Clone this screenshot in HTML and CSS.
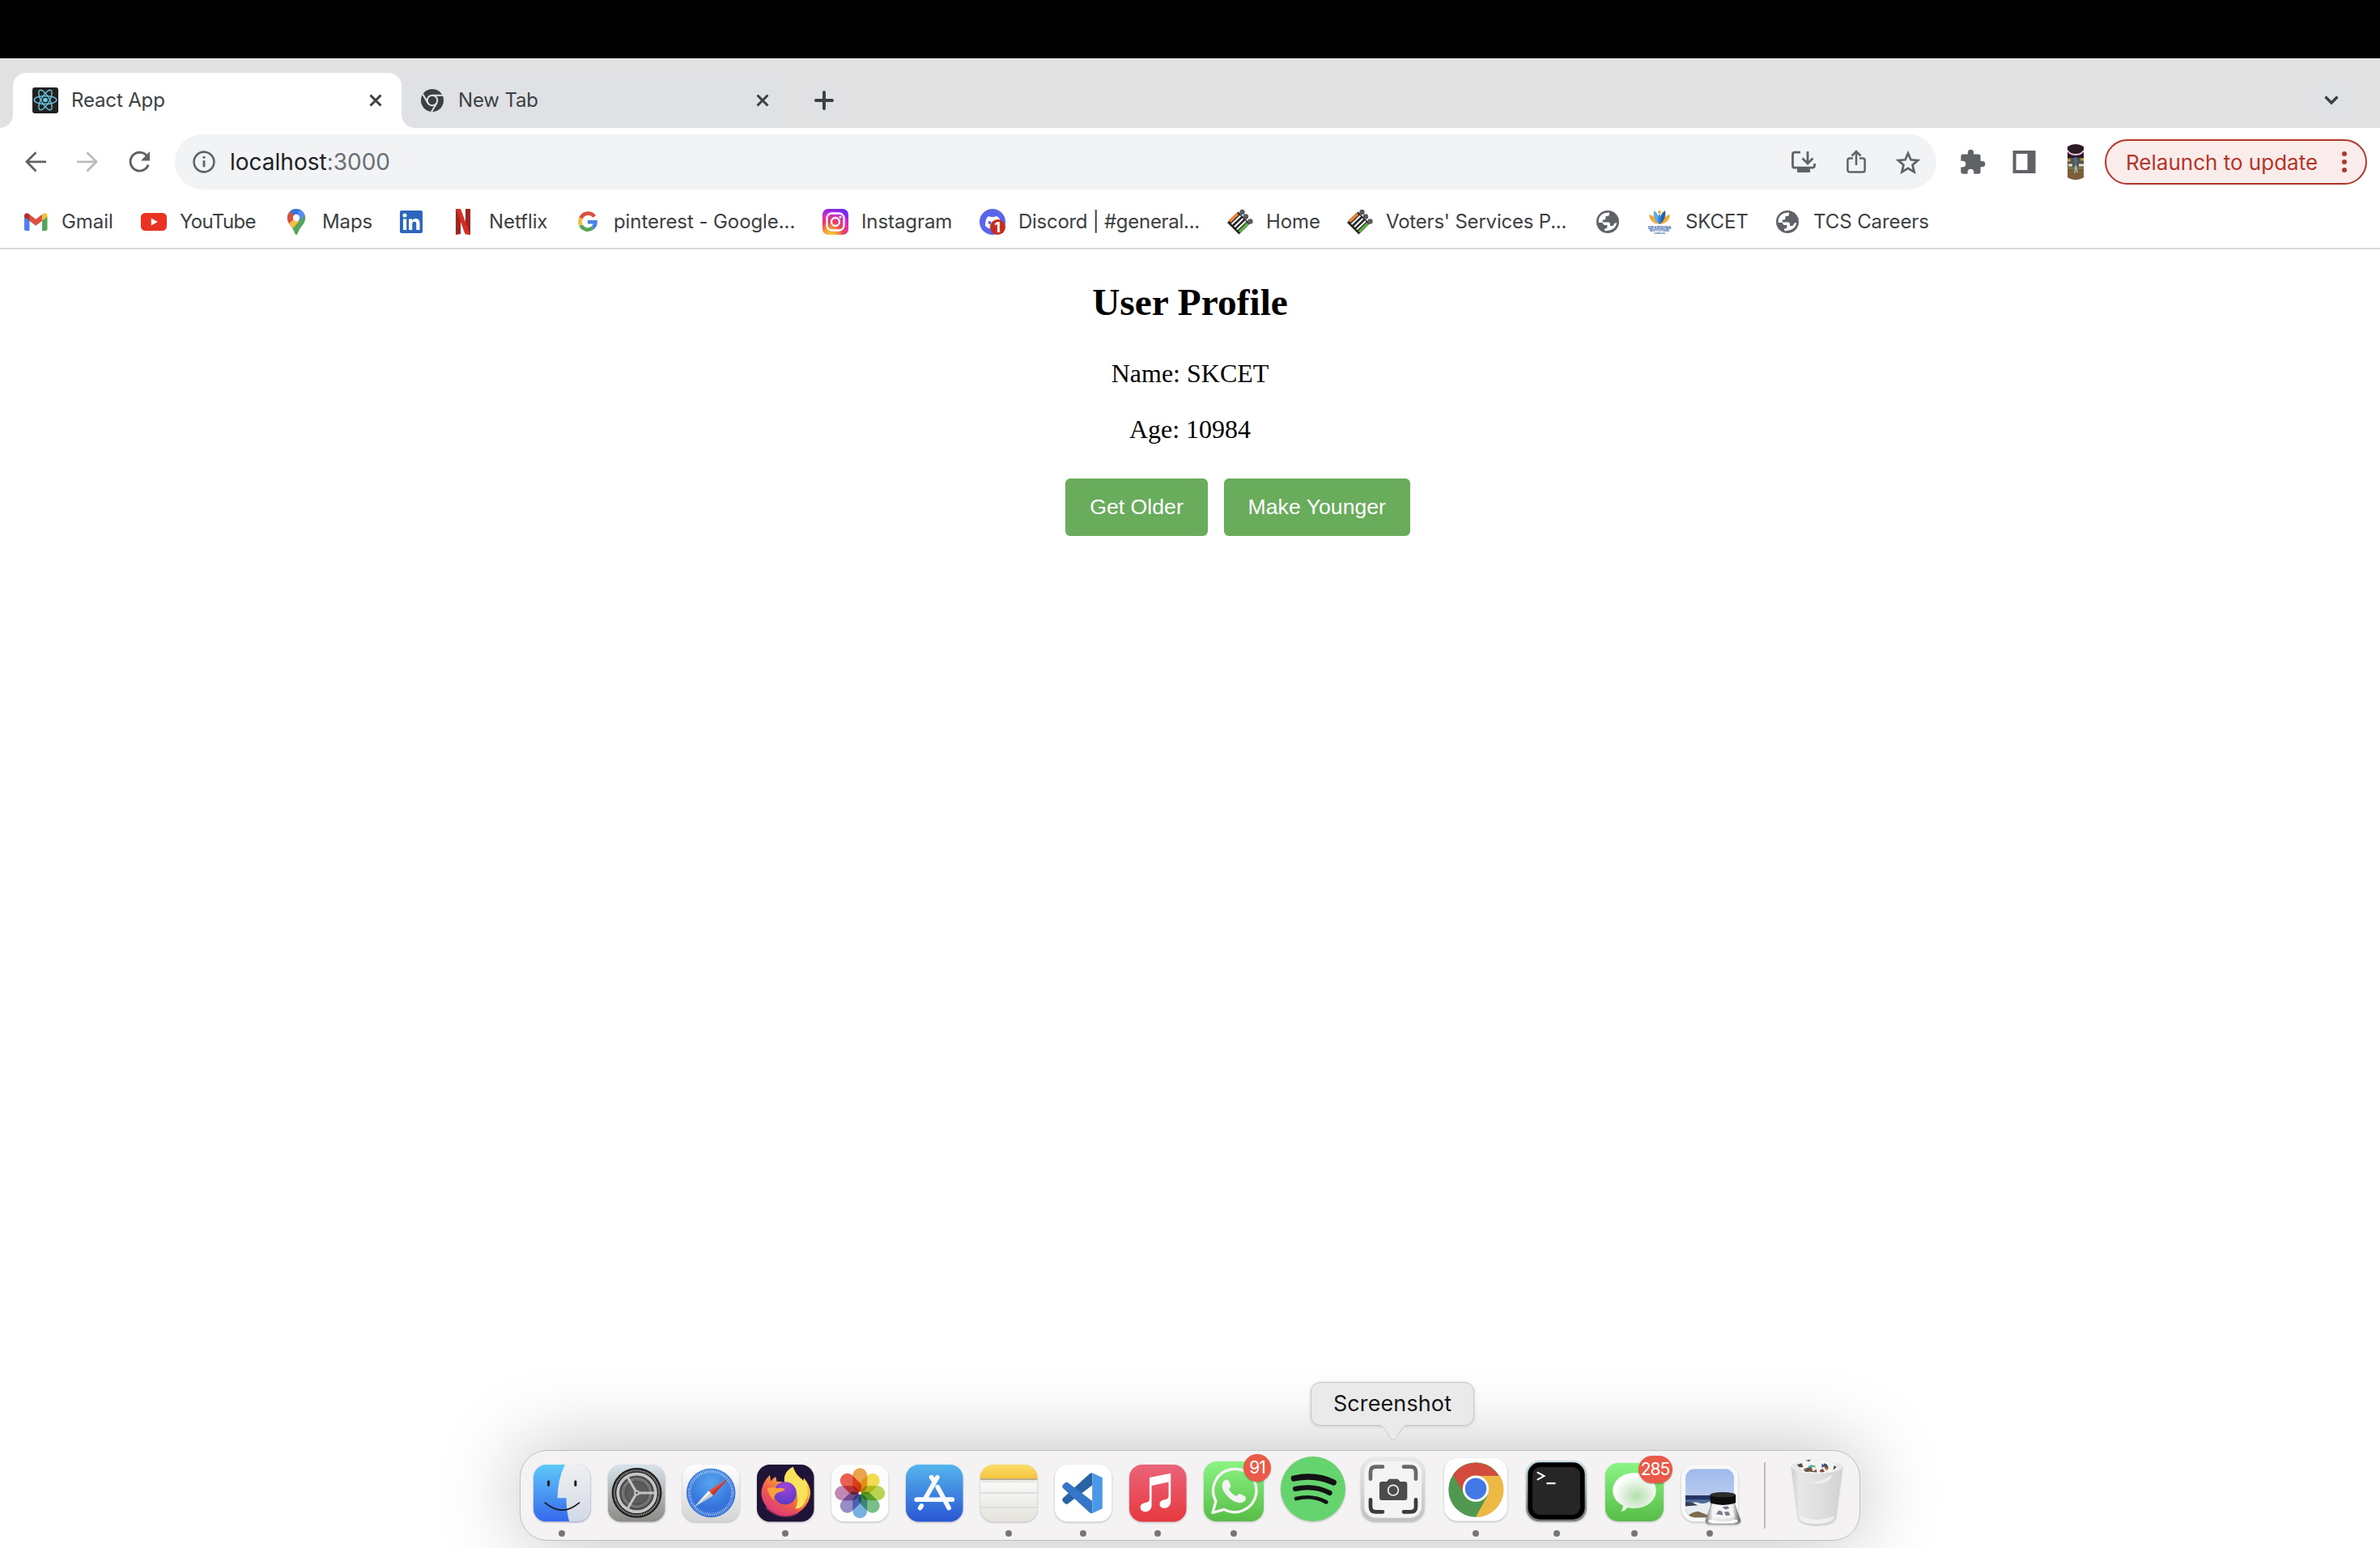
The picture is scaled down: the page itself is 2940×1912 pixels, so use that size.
FILE: index.html
```html
<!DOCTYPE html>
<html lang="en">
<head>
<meta charset="utf-8">
<title>React App</title>
<link rel="stylesheet" href="styles.css">
</head>
<body>
<div class="notch"></div>
<header class="tabs">
  <div class="tab active">
    <svg class="fav32" viewBox="0 0 32 32"><rect width="32" height="32" rx="3" fill="#212121"/><g fill="none" stroke="#6dc8e6" stroke-width="1.4"><ellipse cx="16" cy="15.500" rx="13.800" ry="5"/><ellipse cx="16" cy="15.500" rx="13.800" ry="5" transform="rotate(60 16 15.5)"/><ellipse cx="16" cy="15.500" rx="13.800" ry="5" transform="rotate(120 16 15.5)"/></g><circle cx="16" cy="15.500" r="2.800" fill="#6dc8e6"/></svg>
    <span class="tab-title">React App</span>
    <svg class="close" viewBox="0 0 16 16"><path d="M1.500 1.500l13 13M14.500 1.500l-13 13" stroke="#3c4043" stroke-width="3"/></svg>
  </div>
  <div class="tab idle">
    <svg class="fav28" viewBox="0 0 28 28"><circle cx="14" cy="14" r="14" fill="#3c4043"/><g fill="none" stroke="#dfe1e5" stroke-width="2"><circle cx="14" cy="14" r="6.300"/><path d="M14 7.700H27M8.500 17.200L2 6M19.500 17.200L13 28"/></g></svg>
    <span class="tab-title">New Tab</span>
    <svg class="close" viewBox="0 0 16 16"><path d="M1.500 1.500l13 13M14.500 1.500l-13 13" stroke="#3c4043" stroke-width="3"/></svg>
  </div>
  <div class="round plus"><svg width="24" height="24" viewBox="0 0 24 24"><path d="M12 2v20M2 12h20" stroke="#3c4043" stroke-width="4" stroke-linecap="round"/></svg></div>
  <div class="round chev"><svg width="18" height="12" viewBox="0 0 18 12"><path d="M1.500 1.500L9 9l7.500-7.500" fill="none" stroke="#3c4043" stroke-width="3.400"/></svg></div>
</header>
<nav class="toolbar">
  <svg class="nav" viewBox="0 0 26 26"><path d="M26 12.800H3M13.500 1.200L2 12.800l11.500 11.600" fill="none" stroke="#5f6368" stroke-width="2.800"/></svg>
  <svg class="nav" viewBox="0 0 26 26"><path d="M0 12.800h23M12.500 1.200L24 12.800 12.500 24.400" fill="none" stroke="#babcbe" stroke-width="2.800"/></svg>
  <svg class="nav" viewBox="0 0 26 26"><path d="M22.600 5.800A11.400 11.400 0 1 0 24.200 16.500" fill="none" stroke="#5f6368" stroke-width="2.900"/><path d="M26 0v11.500H15z" fill="#5f6368"/></svg>
  <div class="omnibox">
    <svg width="28" height="28" viewBox="0 0 28 28"><circle cx="14" cy="14" r="12.400" fill="none" stroke="#5f6368" stroke-width="2.600"/><path d="M14 12.300v8M14 7v2.800" stroke="#5f6368" stroke-width="2.800"/></svg>
    <span class="url">localhost<span>:3000</span></span>
    <svg class="tool install" viewBox="0 0 30 28"><path d="M11 2.200H4a2.500 2.500 0 0 0-2.500 2.500v14a2.500 2.500 0 0 0 2.500 2.500h22a2.500 2.500 0 0 0 2.500-2.500V16M20 1v14M13.500 9.500L20 16l6.500-6.500" fill="none" stroke="#5f6368" stroke-width="2.800"/><path d="M7 21h16v6H7z" fill="#5f6368"/></svg>
    <svg class="tool share" viewBox="0 0 24 30"><path d="M8 10.500H4a2.600 2.600 0 0 0-2.600 2.600V25A2.600 2.600 0 0 0 4 27.600h16a2.600 2.600 0 0 0 2.600-2.600V13.100a2.600 2.600 0 0 0-2.600-2.600h-4M12 19V3M6.500 7.500L12 2l5.500 5.500" fill="none" stroke="#5f6368" stroke-width="2.500"/></svg>
    <svg class="tool star" viewBox="0 0 30 29"><path d="M15 4l3.200 7.500 8.200.7-6.200 5.400 1.900 8L15 21.300l-7.100 4.300 1.900-8-6.200-5.400 8.200-.7z" fill="none" stroke="#5f6368" stroke-width="2.600"/></svg>
  </div>
  <svg class="puzzle" viewBox="1.800 1.200 21 21"><path fill="#5f6368" d="M20.500 11H19V7a2 2 0 0 0-2-2h-4V3.500a2.500 2.500 0 0 0-5 0V5H4a2 2 0 0 0-2 2v3.800h1.500a2.700 2.700 0 0 1 0 5.400H2V20a2 2 0 0 0 2 2h3.800v-1.500a2.700 2.700 0 0 1 5.400 0V22H17a2 2 0 0 0 2-2v-4h1.500a2.500 2.500 0 0 0 0-5z"/></svg>
  <svg class="panel" viewBox="0 0 28 28"><path fill="#5f6368" fill-rule="evenodd" d="M0 0h28v28H0zM4 4v20h14V4z"/></svg>
  <svg class="avatar" viewBox="0 0 20 44"><clipPath id="av"><path d="M0 3Q10-3 20 3V41Q10 47 0 41z"/></clipPath><g clip-path="url(#av)"><path fill="#2a1a24" d="M0 0h20v44H0z"/><path fill="#5b5346" d="M0 17h20v13H0z"/><path fill="#7a5f38" d="M0 30h20v14H0z"/><path d="M0 8q3 5 10 5t10-5" fill="none" stroke="#e6c3df" stroke-width="2"/><path d="M0 20h4M16 19h4" stroke="#b9a04c" stroke-width="3"/><path d="M1 26h5M14 26h6" stroke="#e4e2d5" stroke-width="3"/><path d="M0 29.500h20" stroke="#73924f" stroke-width="1.500"/><path d="M10 16v10M8 20h4" stroke="#49699d" stroke-width="3"/><path d="M10 26l-1 10M10 26l2 9" stroke="#9fb2c8" stroke-width="1.500"/></g></svg>
  <div class="relaunch"><span>Relaunch to update</span><svg width="6" height="26" viewBox="0 0 6 26"><g fill="#b3362b"><circle cx="3" cy="3" r="3"/><circle cx="3" cy="13" r="3"/><circle cx="3" cy="23" r="3"/></g></svg></div>
</nav>
<nav class="bookmarks">
  <div class="bm"><svg viewBox="0 0 32 32"><path fill="#4d82ee" d="M2 9l6.500 4.500V27H4a2 2 0 0 1-2-2z"/><path fill="#55a45b" d="M30.500 9L24 13.500V27h4.500a2 2 0 0 0 2-2z"/><path fill="#d95040" d="M8 6.500l8.200 6.300L24.500 6.500v8l-8.300 6.200L8 14.500z"/><path fill="#b3302a" d="M2 8.500C2 5 5.500 4 8.500 6.800v7.700L2 10z"/><path fill="#f2bf42" d="M30.500 8.500C30.500 5 27 4 24 6.800v7.700l6.500-4.500z"/></svg><span>Gmail</span></div>
  <div class="bm yt"><svg viewBox="0 0 32 32"><rect y="5" width="32" height="22" rx="5.500" fill="#e93323"/><path fill="#fff" d="M12.800 11.500v9l8-4.500z"/></svg><span>YouTube</span></div>
  <div class="bm"><svg viewBox="0 0 32 32"><clipPath id="pin"><path d="M16 0c6 0 11 4.800 11 11 0 8-7 11-9.500 19.500Q16 33 14.500 30.500C12 22 5 19 5 11 5 4.800 10 0 16 0z"/></clipPath><g clip-path="url(#pin)"><path fill="#55a45b" d="M0 0h32v32H0z"/><path fill="#3874e0" d="M0-2h24L16 11 6 3z"/><path fill="#548df3" d="M20-1l8 8-9 10-3-6z"/><path fill="#d95040" d="M3 4l5-1 8 8-7 9-6-4z"/><path fill="#f2bf42" d="M15 11l5 5-8 10-5-8z"/><path fill="#55a45b" d="M28 6v15L16 33l-5-8z"/></g><circle cx="16" cy="11" r="4.200" fill="#fff"/></svg><span>Maps</span></div>
  <div class="bm"><svg viewBox="0 0 32 32"><rect x="2" y="2" width="28" height="28" rx="2" fill="#2c66bd"/><g fill="#fff"><circle cx="8" cy="8" r="2.500"/><path d="M6 12.500h4.200V26H6zM13 12.500h4v2c1-1.600 2.500-2.400 4.500-2.400 4 0 5 2.700 5 6.400V26h-4.200v-6.700c0-2-.4-3.500-2.300-3.500-2 0-2.800 1.500-2.800 3.500V26H13z"/></g></svg></div>
  <div class="bm"><svg viewBox="0 0 32 32"><path fill="#a4231d" d="M7 0h6v31L7 32zM19 0h6v32l-6-1z"/><path fill="#d32f27" d="M7 0h6l12 32-6.500-1z"/></svg><span>Netflix</span></div>
  <div class="bm"><svg viewBox="0 0 32 32"><g fill="none" stroke-width="4.600"><path stroke="#d95040" d="M24.300 9.500A9.700 9.700 0 0 0 7.500 11.600"/><path stroke="#f2bf42" d="M7.500 11.600a9.700 9.700 0 0 0 0 8.800"/><path stroke="#55a45b" d="M7.500 20.400a9.700 9.700 0 0 0 14.700 3"/><path stroke="#4d82ee" d="M22.200 23.400A9.300 9.300 0 0 0 25.600 16.200H16"/></g></svg><span>pinterest - Google...</span></div>
  <div class="bm"><svg viewBox="0 0 32 32"><defs><radialGradient id="ig" cx=".3" cy="1.050" r="1.100"><stop offset="0" stop-color="#f8d548"/><stop offset=".25" stop-color="#f3a13b"/><stop offset=".5" stop-color="#ea3d5d"/><stop offset=".75" stop-color="#d72ec4"/><stop offset="1" stop-color="#6b28f5"/></radialGradient></defs><rect width="32" height="32" rx="7" fill="url(#ig)"/><g fill="none" stroke="#fff" stroke-width="2.300"><rect x="5.500" y="5.500" width="21" height="21" rx="6"/><circle cx="16" cy="16" r="5"/></g><circle cx="22" cy="10" r="1.500" fill="#fff"/></svg><span>Instagram</span></div>
  <div class="bm discord"><svg viewBox="0 0 32 32"><circle cx="16" cy="16" r="16" fill="#5a65ea"/><path fill="#fff" d="M11 9l3 1h4l3-1 3 2c2 4 2.500 7 2.500 11l-5 2H11l-4-3c0-4 .5-7 2-10z"/><circle cx="12.500" cy="17" r="2" fill="#5a65ea"/><circle cx="22.500" cy="22.500" r="9.500" fill="#c52d21"/><text x="22" y="29" text-anchor="middle" font-size="18" font-weight="700" fill="#fff" font-family="Inter, sans-serif">1</text></svg><span>Discord | #general...</span></div>
  <div class="bm"><svg viewBox="0 0 32 32"><g id="eci"><path fill="#242424" d="M13.500 3.500L28 18 14.500 31.500 0 17z"/><path stroke="#e8833a" stroke-width="3.800" d="M3 15.500L13 6"/><path stroke="#fff" stroke-width="2" d="M5.500 19L16.500 8.500M9 22.300L19.500 12M12 25.500L23 15"/><path stroke="#60ad45" stroke-width="3.800" d="M15 28.500L25.500 18"/><g fill="#5b5b5b"><circle cx="18.500" cy="4" r="3.200"/><circle cx="23" cy="9.500" r="3.200"/><circle cx="28.500" cy="15.500" r="3.200"/></g></g></svg><span>Home</span></div>
  <div class="bm voters"><svg viewBox="0 0 32 32"><use href="#eci"/></svg><span>Voters' Services P...</span></div>
  <div class="bm"><svg viewBox="0 0 32 32"><g id="globe"><circle cx="16" cy="16" r="14" fill="#5f6368"/><path fill="#fff" d="M4.700 17C4 9 9.500 4.500 18 4.500V7q0 2-2.500 2H13.500v2.500q0 2-2 2H9.800v3h7q2.200 0 2.200 2.200v2.300h2.500q1.500 0 2-1.500l.5-1.500 3.300-1Q26 26.500 14 27.300q-1.500-.1-2-.8v-2q3.500 0 3.500-2.500v-2h-3q-1.500 0-2-1.500L9.500 17z"/></g></svg></div>
  <div class="bm"><svg viewBox="0 0 32 32"><path fill="#f0ad3e" d="M3 7Q13 9 16 19 4 18 3 7zM29 7Q19 9 16 19 28 18 29 7z"/><path fill="#5daee5" d="M9 2q7 4 7 17Q7 13 9 2z"/><path fill="#2560ae" d="M23 2q-7 4-7 17 9-6 7-17z"/><path fill="#3b7fcb" d="M16 6q-4 6 0 13 4-7 0-13z"/><circle cx="16" cy="4" r="2" fill="#f0ad3e"/><g fill="#2d5eaa" font-family="Inter, sans-serif" font-weight="700" text-anchor="middle"><text x="16" y="24.600" font-size="4.600">SRI KRISHNA</text><text x="16" y="28" font-size="3.500">INSTITUTIONS</text><text x="16" y="30.500" font-size="2.200">COIMBATORE</text></g></svg><span>SKCET</span></div>
  <div class="bm"><svg viewBox="0 0 32 32"><use href="#globe"/></svg><span>TCS Careers</span></div>
</nav>
<main>
  <h2>User Profile</h2>
  <p>Name: SKCET</p>
  <p>Age: 10984</p>
  <div class="buttons"><button>Get Older</button><button>Make Younger</button></div>
</main>
<div class="dock-layer">
<div class="dock">
  <div class="app run"><svg viewBox="116 146 212 212"><defs><linearGradient id="f1" x2="0" y2="1"><stop stop-color="#5fc8f8"/><stop offset="1" stop-color="#3568ee"/></linearGradient><linearGradient id="f2" x2="0" y2="1"><stop stop-color="#f0f0f1"/><stop offset="1" stop-color="#d2d9e6"/></linearGradient><clipPath id="fc"><rect x="116" y="146" width="212" height="212" rx="48"/></clipPath></defs><g clip-path="url(#fc)"><path fill="url(#f1)" d="M116 146h212v212H116z"/><path fill="url(#f2)" d="M233 146q-28 58-28 124h33q0 48 11 88h80V146z"/></g><path d="M172 209v14M272 209v14" stroke="#17181c" stroke-width="9" stroke-linecap="round"/><path d="M159 288q64 54 127 0" fill="none" stroke="#17181c" stroke-width="5" stroke-linecap="round"/></svg></div>
  <div class="app"><svg viewBox="391 146 212 212"><defs><linearGradient id="s1" x2="0" y2="1"><stop stop-color="#d6e2ea"/><stop offset="1" stop-color="#8c8b86"/></linearGradient></defs><rect x="391" y="146" width="212" height="212" rx="48" fill="url(#s1)"/><circle cx="498" cy="251" r="93" fill="#1d1d1d"/><circle cx="498" cy="251" r="83" fill="none" stroke="#aaa" stroke-width="7" stroke-dasharray="3.500 3"/><circle cx="498" cy="251" r="76" fill="#777"/><circle cx="498" cy="251" r="70" fill="#4d4d4b" stroke="#c4c5c6" stroke-width="11"/><circle cx="498" cy="251" r="53" fill="none" stroke="#7d7d7b" stroke-width="6"/><circle cx="498" cy="251" r="47" fill="none" stroke="#949492" stroke-width="5" stroke-dasharray="3 3"/><circle cx="498" cy="251" r="40" fill="#5c5c5a"/><path d="M498 251h72M498 251l-36-62M498 251l-36 62" stroke="#c4c5c6" stroke-width="9"/><circle cx="498" cy="251" r="10" fill="#c4c5c6"/><circle cx="498" cy="251" r="4" fill="#444"/></svg></div>
  <div class="app"><svg viewBox="668 146 212 212"><defs><linearGradient id="sf1" x2="0" y2="1"><stop stop-color="#fff"/><stop offset="1" stop-color="#d4d4d4"/></linearGradient><radialGradient id="sf2" cy=".3"><stop stop-color="#55a7f0"/><stop offset="1" stop-color="#3672dc"/></radialGradient></defs><rect x="668" y="146" width="212" height="212" rx="48" fill="url(#sf1)"/><circle cx="774" cy="251" r="91" fill="url(#sf2)"/><circle cx="774" cy="251" r="80" fill="none" stroke="#e8f2fc" stroke-width="11" stroke-dasharray="1.800 5.180"/><path fill="#e34d42" d="M839 197l-74 46 18 17z"/><path fill="#f3f3f3" d="M711 305l54-62 9 9z"/><path fill="#cfcfcf" d="M711 305l72-45-9-8z"/><path fill="#c2382d" d="M839 197l-65 55 9 8z"/></svg></div>
  <div class="app run"><svg viewBox="944 146 212 212"><defs><linearGradient id="ff1" x1=".9" y1="0" x2=".2" y2="1"><stop stop-color="#fdea56"/><stop offset=".35" stop-color="#f9b43e"/><stop offset=".65" stop-color="#ef5f45"/><stop offset="1" stop-color="#d9338a"/></linearGradient><radialGradient id="ff2" cx=".5" cy=".2" r=".8"><stop stop-color="#a245d8"/><stop offset="1" stop-color="#5a3bc6"/></radialGradient></defs><rect x="944" y="146" width="212" height="212" rx="48" fill="#1f1438"/><path fill="url(#ff1)" d="M960 255q0-40 32-71l4 24q6-12 18-17l4 18q16-2 28 5v-20q4-26 32-40 6 22 25 40 9 5 13 14l3-12q24 28 24 57a92 92 0 0 1-183 2z"/><path fill="#fbe25c" d="M1046 196q4-28 32-42 6 22 25 40 9 5 13 14l3-12q25 44 6 82-10 32-38 32 14-30 4-60-20-30-45-34z"/><circle cx="1049" cy="252" r="42" fill="url(#ff2)"/><path fill="#f6a13a" d="M983 234q22-8 36 0 18-4 30 4-10 10-26 11-18 10-16 30-22-24-24-45z"/><path d="M980 302q56 52 116 18" fill="none" stroke="#e33b6c" stroke-width="16" opacity=".5"/></svg></div>
  <div class="app"><svg viewBox="80 146 212 212"><rect x="80" y="146" width="212" height="212" rx="48" fill="#fdfdfd"/><g class="petals"><rect x="159" y="159" width="54" height="90" rx="27" fill="#ee9a3a"/><rect x="159" y="159" width="54" height="90" rx="27" fill="#f0dc3c" transform="rotate(45 186 252)"/><rect x="159" y="159" width="54" height="90" rx="27" fill="#b4d142" transform="rotate(90 186 252)"/><rect x="159" y="159" width="54" height="90" rx="27" fill="#6bb97c" transform="rotate(135 186 252)"/><rect x="159" y="159" width="54" height="90" rx="27" fill="#6aaae0" transform="rotate(180 186 252)"/><rect x="159" y="159" width="54" height="90" rx="27" fill="#8c81c2" transform="rotate(225 186 252)"/><rect x="159" y="159" width="54" height="90" rx="27" fill="#bf7bb0" transform="rotate(270 186 252)"/><rect x="159" y="159" width="54" height="90" rx="27" fill="#e9503d" transform="rotate(315 186 252)"/></g><circle cx="186" cy="252" r="5" fill="#fff"/></svg></div>
  <div class="app"><svg viewBox="356 146 212 212"><defs><linearGradient id="as" x2="0" y2="1"><stop stop-color="#54b5ec"/><stop offset="1" stop-color="#2a56d4"/></linearGradient></defs><rect x="356" y="146" width="212" height="212" rx="48" fill="url(#as)"/><g stroke="#f7faff" stroke-width="17" stroke-linecap="round"><path d="M396 276h44M482 276h46M451 193l6 9M474 229l42 78M473 193l-44 77M414 299l-5 8"/><path d="M396 276h132"/></g></svg></div>
  <div class="app run"><svg viewBox="632 146 212 212"><defs><clipPath id="nc"><rect x="632" y="146" width="212" height="212" rx="48"/></clipPath><linearGradient id="n1" x2="0" y2="1"><stop stop-color="#fbdd67"/><stop offset="1" stop-color="#f5c43c"/></linearGradient><linearGradient id="n2" x2="0" y2="1"><stop stop-color="#fafaf9"/><stop offset="1" stop-color="#e3e2dc"/></linearGradient></defs><g clip-path="url(#nc)"><path fill="url(#n2)" d="M632 200h212v160H632z"/><path fill="url(#n1)" d="M632 146h212v53H632z"/><path fill="#b5aa8c" d="M632 198h212v6H632z"/><path d="M636 210h204" stroke="#c2c2c2" stroke-width="5" stroke-dasharray="3 4"/><path d="M632 251h212M632 305h212" stroke="#dcdce0" stroke-width="5"/></g></svg></div>
  <div class="app run"><svg viewBox="909 146 212 212"><rect x="909" y="146" width="212" height="212" rx="48" fill="#fff"/><path fill="#2962a5" d="M1048 177v46l-90 68q-6 4-11-1l-8-7q-5-6 0-12l101-93z"/><path fill="#3577c6" d="M1048 327v-46l-90-68q-6-4-11 1l-8 7q-5 6 0 12l101 93z"/><path fill="#4b98e8" d="M1048 177l38 17v115l-38 18z"/></svg></div>
  <div class="app run"><svg viewBox="44 146 212 212"><defs><linearGradient id="mu" x2="0" y2="1"><stop stop-color="#ea6579"/><stop offset="1" stop-color="#e7383f"/></linearGradient></defs><rect x="44" y="146" width="212" height="212" rx="48" fill="url(#mu)"/><path fill="#fff" d="M119 194l79-16v106c0 28-41 31-41 9 0-16 17-15 26-19q7-3 7-10v-53l-63 13v73c0 30-42 31-42 8 0-17 17-16 27-20q7-3 7-10z"/></svg></div>
  <div class="app run wa"><svg viewBox="321 135 222 222"><defs><linearGradient id="gr" x2="0" y2="1"><stop stop-color="#8bf584"/><stop offset="1" stop-color="#56bd46"/></linearGradient></defs><rect x="321" y="135" width="222" height="222" rx="48" fill="url(#gr)"/><path fill="none" stroke="#f4f2f3" stroke-width="10" stroke-linejoin="round" d="M354 325l12-43a80 80 0 1 1 31 31z"/><path fill="#f4f2f3" d="M401 204q10-3 14 6l6 15q1 5-7 12 8 19 28 27 8-10 12-9l19 9q6 4 3 13-6 12-22 12-22-2-43-23-22-22-22-41 1-16 12-21z"/></svg><span class="badge">91</span></div>
  <div class="app spotify"><svg viewBox="606 121 240 240"><circle cx="726" cy="241" r="120" fill="#65d46e"/><g fill="none" stroke="#121212" stroke-linecap="round"><path stroke-width="22" d="M655 202q80-17 147 15"/><path stroke-width="18" d="M660 241q70-16 128 15"/><path stroke-width="14" d="M663 277q60-15 112 13"/></g></svg></div>
  <div class="app shot"><svg viewBox="304 328 237 237"><defs><linearGradient id="ss" x2="0" y2="1"><stop stop-color="#e9e9e9"/><stop offset="1" stop-color="#c2c2c2"/></linearGradient></defs><rect x="305" y="329" width="235" height="237" rx="52" fill="url(#ss)"/><rect x="317" y="342" width="212" height="210" rx="42" fill="#f4f4f4"/><g fill="none" stroke-width="14" stroke-linecap="round"><path stroke="#686868" d="M340 408v-25q0-20 20-20h25M463 363h25q20 0 20 20v25"/><path stroke="#3b3b3b" d="M340 485v25q0 20 20 20h25M463 530h25q20 0 20-20v-25"/></g><path fill="#4c4c4c" d="M382 418h18l9-10h32l9 10h17q9 0 9 9v51q0 9-9 9h-85q-9 0-9-9v-51q0-9 9-9z"/><circle cx="424" cy="450" r="19" fill="#4c4c4c" stroke="#f4f4f4" stroke-width="5"/></svg></div>
  <div class="app run chrome"><svg viewBox="611 330 236 236"><rect x="611" y="330" width="236" height="235" rx="50" fill="#fff"/><circle cx="729" cy="448" r="102" fill="#50984f"/><path fill="#edb944" d="M729 396h90a102 102 0 0 1-90 154l44-80z"/><path fill="#d34b3c" d="M644 392a102 102 0 0 1 171 4h-86a49 49 0 0 0-45 65z"/><circle cx="729" cy="444" r="49" fill="#fff"/><circle cx="729" cy="444" r="40" fill="#4379e6"/></svg></div>
  <div class="app run term"><svg viewBox="917 341 224 224"><defs><linearGradient id="te" x2="0" y2="1"><stop stop-color="#c8dfe9"/><stop offset="1" stop-color="#777"/></linearGradient></defs><rect x="917" y="341" width="224" height="225" rx="50" fill="url(#te)"/><rect x="924" y="348" width="210" height="210" rx="44" fill="#000"/><rect x="941" y="365" width="176" height="176" rx="28" fill="#262626"/><path d="M958 384l26 14-26 14M993 425h33" fill="none" stroke="#fff" stroke-width="6"/></svg></div>
  <div class="app run msg"><svg viewBox="69 140 217 217"><defs><radialGradient id="bu" cy=".6" cx=".55"><stop stop-color="#b5ddaf"/><stop offset="1" stop-color="#fbfdfb"/></radialGradient></defs><rect x="69" y="140" width="217" height="217" rx="48" fill="url(#gr)"/><path fill="url(#bu)" d="M177 177c45 0 81 29 81 66s-36 66-81 66q-14 0-25-3-8 12-25 15 9-9 8-23c-24-12-38-32-38-55 0-37 35-66 80-66z"/></svg><span class="badge wide">285</span></div>
  <div class="app run prev"><svg viewBox="351 146 212 212"><defs><linearGradient id="sk" x2="0" y2="1"><stop stop-color="#9db9ec"/><stop offset="1" stop-color="#b8cbed"/></linearGradient><clipPath id="pc"><rect x="366" y="162" width="181" height="180" rx="34"/></clipPath><linearGradient id="gl"><stop stop-color="#777"/><stop offset=".2" stop-color="#eee"/><stop offset=".8" stop-color="#ddd"/><stop offset="1" stop-color="#555"/></linearGradient></defs><rect x="351" y="146" width="211" height="212" rx="48" fill="#f8f8f8"/><g clip-path="url(#pc)"><path fill="url(#sk)" d="M366 162h182v100H366z"/><path fill="#273465" d="M366 260h182v26H366z"/><path fill="#4e6c99" d="M366 276h182v70H366z"/><path fill="#e8edf2" d="M366 300q30-20 50-12t45-8v62h-95z"/><path fill="#354054" d="M366 285l26 2 20 10-46 4z"/><path fill="#7e6b4e" d="M372 342q12-20 42-22l36 14v10z"/></g><path fill="url(#gl)" stroke="#777" stroke-width="2" d="M464 290h84l22 62q2 14-20 15h-90q-20 0-19-14z"/><path fill="#f5f5f5" d="M474 292h64l10 48q-40 14-84 0z"/><path fill="#777d8c" d="M480 330l10-14 12 4 4 14zM502 304l20-4 8 8-14 6zM510 322l16-2 6 14-16 2z"/><path fill="#fff" d="M456 350q50 16 100 0l6 8q-50 12-112 0z"/><path fill="#0d0d0d" d="M458 258v30q48 16 95 0v-30z"/><ellipse cx="505" cy="258" rx="47" ry="10" fill="#2d2d2d"/></svg></div>
  <div class="sep"></div>
  <div class="app trash"><svg viewBox="762 128 190 246"><defs><linearGradient id="tr"><stop stop-color="#d0d0d0"/><stop offset=".15" stop-color="#e8e8e8"/><stop offset=".6" stop-color="#dedede"/><stop offset="1" stop-color="#d2d2d2"/></linearGradient></defs><ellipse cx="857" cy="156" rx="94" ry="18" fill="#e6e6e6"/><path fill="#f5f5f5" d="M778 152l32-18 22-7 20 12 26-10 40 14 18 22-40 32-70-4z"/><path fill="#4d4d4d" d="M782 150l18-6 6 14-14 2zM882 144l12 4 6 12-14 4zM814 134l20-4-6 8zM920 152l10 6-12 12zM806 168l20 4 4 8-16-2z"/><path fill="#71543b" d="M806 166l44-14 8 28-24-4z"/><path fill="#ececec" d="M836 160l14-6 4 14-12 6z"/><path fill="#45b8d8" d="M822 156l14-7 12 6-16 5z"/><path fill="#56b551" d="M834 152l16 0-4 8z"/><path fill="#3c4f80" d="M874 146l14 6-12 10z"/><path fill="#8a4a38" d="M866 172l12-8 8 10-12 8z"/><path fill="#c0683a" d="M886 160l16 2-10 10z"/><path fill="url(#tr)" d="M763 158q14 20 94 22 80-2 94-22l-24 186q-4 28-70 28t-70-28z"/><path fill="#f4f4f4" opacity=".8" d="M830 215q50 0 84-30-10 44-84 30zM790 340q66 28 132 0-2 28-66 29t-66-29z"/><path fill="none" stroke="#f5f5f5" stroke-width="4" d="M764 156q14 22 93 24 79-2 93-24"/></svg></div>
</div>
<div class="tooltip"><span>Screenshot</span><svg viewBox="0 0 34 20"><path fill="#ebeaea" d="M0 0Q4 1 7 6L14 16.500q3 4 6 0L27 6Q30 1 34 0z"/><path fill="none" stroke="#c6c6c6" d="M0 1Q4 1 7 6L14 16.500q3 4 6 0L27 6Q30 1 34 1"/></svg></div>
</div>
</body>
</html>
```
FILE: styles.css
```css
* { box-sizing: border-box; }
body { margin: 0; width: 2940px; height: 1912px; overflow: hidden; position: relative; background: #fff; font-family: Inter, "Liberation Sans", sans-serif; color: #3c4043; }
svg { display: block; flex: none; overflow: visible; }
span { white-space: nowrap; }
.notch { height: 72px; background: #000; }

.tabs { height: 86px; background: #e1e1e1; display: flex; align-items: flex-end; padding-left: 16px; }
.tab { height: 68px; width: 480px; display: flex; align-items: center; position: relative; padding: 0 24px; font-size: 24px; }
.active { background: #fff; border-radius: 16px 16px 0 0; z-index: 1; }
.active::before, .active::after { content: ""; position: absolute; bottom: 0; width: 16px; height: 16px; }
.active::before { left: -16px; background: radial-gradient(circle at 0 0, transparent 15.5px, #fff 16px); }
.active::after { right: -16px; background: radial-gradient(circle at 100% 0, transparent 15.5px, #fff 16px); }
.idle { background: #dfe1e5; border-radius: 0 16px 0 0; }
.fav32 { width: 32px; height: 32px; margin-right: 16px; }
.fav28 { width: 28px; height: 28px; margin-right: 18px; }
.tab-title { flex: 1; letter-spacing: -.15px; padding-bottom: 1px; }
.close { width: 16px; height: 16px; }
.idle .close { margin-right: 2px; }
.round { width: 56px; height: 56px; border-radius: 50%; background: #dfe1e5; display: flex; align-items: center; justify-content: center; margin-bottom: 6px; }
.plus { margin-left: 14px; }
.chev { margin-left: auto; margin-right: 32px; }

.toolbar { height: 84px; display: flex; align-items: center; padding: 0 16px 0 31px; }
.nav { width: 26px; height: 26px; margin-right: 38px; }
.nav:nth-child(3) { margin-right: 31px; }
.omnibox { width: 2176px; height: 68px; border-radius: 34px; background: #f1f3f4; display: flex; align-items: center; padding: 0 19px 0 22px; }
.url { flex: 1; margin-left: 18px; font-size: 28px; color: #202124; }
.url span { color: #6b6e72; }
.tool.install { width: 30px; height: 28px; margin-right: 38px; }
.tool.share { width: 24px; height: 30px; margin-right: 36px; }
.tool.star { width: 32px; height: 31px; }
.puzzle { width: 30px; height: 30px; margin-left: 30px; }
.panel { width: 29px; height: 28px; margin-left: 34px; }
.avatar { width: 20px; height: 44px; margin-left: 39px; }
.relaunch { margin-left: 26px; width: 324px; height: 56px; border: 2px solid #b3362b; border-radius: 28px; background: #f9eceb; color: #b3362b; display: flex; align-items: center; justify-content: space-between; padding: 0 23px 0 24px; font-size: 26px; }

.bookmarks { height: 66px; border-bottom: 2px solid #dadada; display: grid; grid-template-columns: 146px 176px 142px 64px 154px 306px 194px 306px 148px 306px 64px 158px auto; padding-left: 28px; align-items: center; }
.bm { display: flex; align-items: center; gap: 16px; font-size: 24px; letter-spacing: -.08px; }
.bm span { padding-bottom: 1px; }
.bm svg { width: 32px; height: 32px; }
.bm.yt { letter-spacing: -.65px; }
.bm.discord { letter-spacing: -.28px; }
.bm.voters { letter-spacing: -.2px; }

main { padding-top: 38px; display: flex; flex-direction: column; align-items: center; font-family: "Liberation Serif", serif; color: #000; }
h2 { margin: 0; font-size: 47.4px; line-height: 55px; }
p { margin: 32px 0 0; font-size: 32px; line-height: 37px; }
h2 + p { margin-top: 42px; }
.buttons { display: flex; gap: 20px; padding-left: 118px; margin-top: 42px; }
button { height: 71px; padding: 0 30px; border: 0; border-radius: 6px; background: #68ac5c; color: #fff; font: 26.667px "Liberation Sans", sans-serif; }
button + button { width: 230px; padding: 0; }

.dock-layer { position: absolute; left: 0; right: 0; bottom: 9px; display: flex; justify-content: center; }
.dock { width: 1656px; height: 112px; border: 1px solid #c0bfbf; border-radius: 34px; background: #f4f2f3; box-shadow: 0 0 100px rgba(0,0,0,.26); display: flex; align-items: flex-end; padding: 0 0 23px 16px; }
.app { position: relative; flex: none; width: 70.5px; margin-right: 21.5px; }
.app > svg { width: 100%; filter: drop-shadow(0 1px 1px rgba(0,0,0,.25)); }
.run::after { content: ""; position: absolute; left: 50%; margin-left: -4px; bottom: -19px; width: 8px; height: 8px; border-radius: 50%; background: #777575; }
.petals rect { mix-blend-mode: multiply; opacity: .9; }
.wa { width: 74px; margin-right: 21px; }
.spotify { width: 80px; margin-right: 19px; }
.shot { width: 79px; margin-right: 23.5px; }
.chrome { width: 78px; margin-right: 23.5px; }
.term { width: 75px; margin-right: 22.5px; }
.msg { width: 72px; margin-right: 22px; }
.prev { margin-right: 32px; }
.sep { width: 2px; height: 82px; background: #bdbcbc; margin-right: 32px; margin-bottom: -9px; }
.trash { width: 63px; margin: 0 0 -5px; }
.badge { position: absolute; top: -9px; right: -9px; height: 34px; width: 34px; border-radius: 17px; background: #ea5a49; color: #fff; font-size: 21px; line-height: 34px; text-align: center; box-shadow: 0 1px 2px rgba(0,0,0,.3); letter-spacing: -1px; }
.wide { width: 42px; right: -11px; }
.tooltip { position: absolute; left: 1619px; bottom: 142px; width: 202px; height: 54px; border: 1px solid #c6c6c6; border-radius: 12px; background: #ebeaea; color: #161616; font-size: 27px; line-height: 52px; text-align: center; box-shadow: 0 1px 4px rgba(0,0,0,.15); }
.tooltip span { letter-spacing: .1px; }
.tooltip svg { position: absolute; left: 84px; top: 52px; width: 34px; height: 20px; }
```
